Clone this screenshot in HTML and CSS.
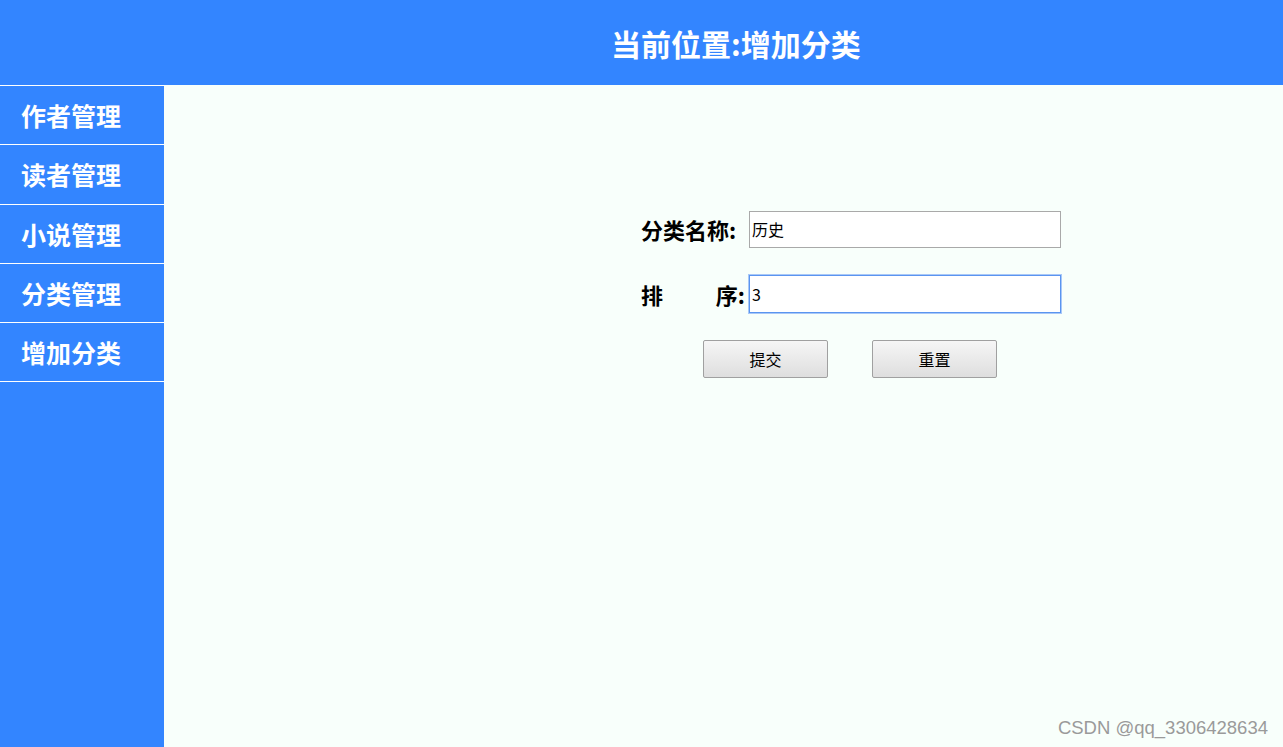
FILE: index.html
```html
<!DOCTYPE html>
<html lang="zh">
<head>
    <meta charset="UTF-8">
    <title>增加分类</title>
    <link rel="stylesheet" href="styles.css">
</head>
<body>
    <div class="top">
        <h1 class="title">当前位置:增加分类</h1>
    </div>
    <div class="main">
        <ul class="menu">
            <li>作者管理</li>
            <li class="tall">读者管理</li>
            <li>小说管理</li>
            <li>分类管理</li>
            <li>增加分类</li>
        </ul>
        <div class="content">
            <form class="add_form">
                <div class="row">
                    <label class="lbl">分类名称:</label>
                    <input type="text" class="txt" value="历史">
                </div>
                <div class="row">
                    <label class="lbl lbl_sort"><span>排</span><span>序:</span></label>
                    <input type="text" class="txt focus" value="3">
                </div>
                <div class="btns">
                    <button type="button" class="btn">提交</button>
                    <button type="button" class="btn">重置</button>
                </div>
            </form>
            <div class="mark">CSDN @qq_3306428634</div>
        </div>
    </div>
</body>
</html>
```

FILE: styles.css
```css
body{
    margin:0;
    font-family: "Noto Sans CJK SC", "Liberation Sans", sans-serif;
    overflow:hidden;
}

.top{
    height:85px;
    background:#3385ff;
    display:flex;
    align-items:center;
    padding-left:611px;
}

.title{
    margin:0;
    color:#fff;
    font-size:30px;
    font-weight:bold;
    line-height:1;
}

.main{
    display:flex;
    height:662px;
}

.menu{
    width:164px;
    margin:0;
    padding:0;
    list-style:none;
    background:#3385ff;
    border-top:1px solid #fff;
}

.menu li{
    height:58px;
    line-height:58px;
    border-bottom:1px solid #fff;
    padding-left:21px;
    color:#fff;
    font-size:25px;
    font-weight:bold;
}

.menu li.tall{
    height:59px;
}

.content{
    flex:1;
    position:relative;
    background:#f8fffb;
}

.add_form{
    padding:125px 0 0 477px;
}

.row{
    display:flex;
    align-items:center;
    height:38px;
    margin-bottom:27px;
}

.row + .row{
    margin-top:1px;
}

.lbl{
    width:108px;
    font-size:22px;
    font-weight:bold;
    color:#000;
}

.lbl_sort{
    display:flex;
    justify-content:space-between;
    width:104px;
    padding-right:4px;
}

.txt{
    box-sizing:border-box;
    width:312px;
    height:37px;
    margin:0;
    padding:0 2px;
    border:1px solid #a9a9a9;
    background:#fff;
    font-family:"Noto Sans CJK SC", sans-serif;
    font-size:16px;
    color:#000;
    outline:none;
}

.focus{
    height:38px;
    border:1px solid #5a95f0;
    box-shadow:0 0 0 1px #a9c8f7;
}

.btns{
    display:flex;
    gap:44px;
    padding-left:62px;
}

.btn{
    width:125px;
    height:38px;
    border:1px solid #a0a0a0;
    border-radius:2px;
    background:linear-gradient(#f6f6f6, #dedede);
    font-family:"Noto Sans CJK SC", sans-serif;
    font-size:16px;
    color:#000;
}

.mark{
    position:absolute;
    right:15px;
    bottom:8px;
    color:#9a9a9a;
    font-family:"Liberation Sans", sans-serif;
    font-size:18.5px;
}
```
